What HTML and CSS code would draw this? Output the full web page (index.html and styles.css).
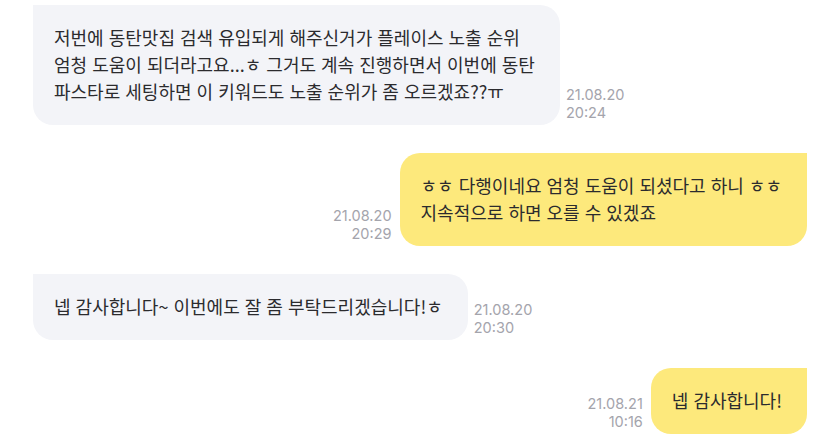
FILE: index.html
```html
<!DOCTYPE html>
<html lang="ko">
<head>
<meta charset="utf-8">
<link rel="stylesheet" href="styles.css">
</head>
<body>
<div class="chat">
  <div class="row in">
    <div class="bubble gray">저번에 동탄맛집 검색 유입되게 해주신거가 플레이스 노출 순위<br>엄청 도움이 되더라고요...ㅎ 그거도 계속 진행하면서 이번에 동탄<br>파스타로 세팅하면 이 키워드도 노출 순위가 좀 오르겠죠??ㅠ</div>
    <div class="time">21.08.20<br>20:24</div>
  </div>
  <div class="row out">
    <div class="time">21.08.20<br>20:29</div>
    <div class="bubble yellow">ㅎㅎ 다행이네요 엄청 도움이 되셨다고 하니 ㅎㅎ<br>지속적으로 하면 오를 수 있겠죠</div>
  </div>
  <div class="row in">
    <div class="bubble gray">넵 감사합니다~ 이번에도 잘 좀 부탁드리겠습니다!ㅎ</div>
    <div class="time">21.08.20<br>20:30</div>
  </div>
  <div class="row out">
    <div class="time">21.08.21<br>10:16</div>
    <div class="bubble yellow">넵 감사합니다!</div>
  </div>
</div>
</body>
</html>
```
FILE: styles.css
```css
html, body {
  margin: 0;
  padding: 0;
  background: #ffffff;
}
.chat {
  display: flex;
  flex-direction: column;
  gap: 28px;
  padding: 5px 28px 0 33px;
  font-family: "Noto Sans CJK KR", "Noto Sans", sans-serif;
}
.row {
  display: flex;
  align-items: flex-end;
}
.row.in {
  justify-content: flex-start;
  gap: 6px;
}
.row.out {
  justify-content: flex-end;
  gap: 8px;
}
.bubble {
  font-size: 18px;
  line-height: 27px;
  color: #2b2b2e;
  padding: 19px 25px 20px 21px;
  border-radius: 20px;
  white-space: nowrap;
}
.bubble.gray {
  background: #f3f4f8;
  border-top-left-radius: 0;
}
.bubble.yellow {
  background: #fde97c;
  border-top-right-radius: 0;
}
.time {
  font-family: Inter, "Noto Sans", sans-serif;
  font-size: 14.5px;
  line-height: 18px;
  color: #a4a4ac;
  padding-bottom: 3px;
}
.row.out .time {
  text-align: right;
}
```
